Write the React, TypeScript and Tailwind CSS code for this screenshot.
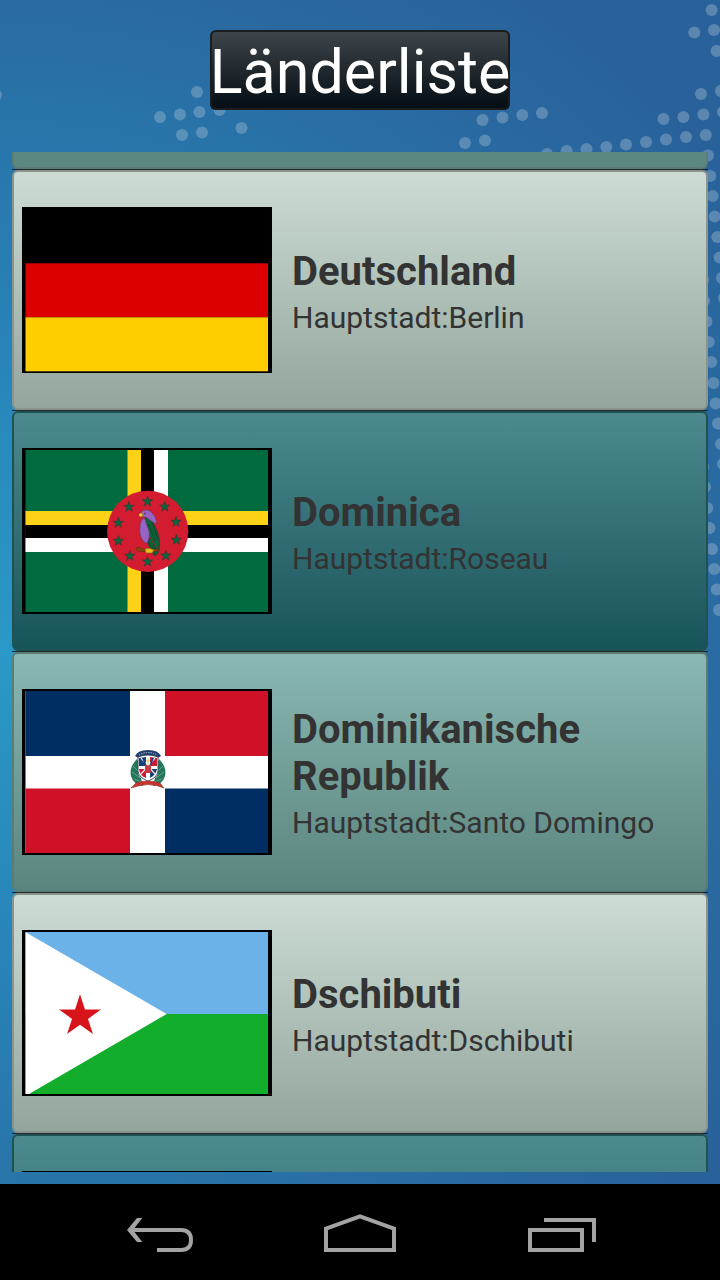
import React from "react";

const DOTS: [number, number][] = [
  [-4, 95], [197, 92], [160, 117], [180, 114.5], [199.5, 112], [219.5, 110], [182, 135], [202, 132.5], [241.5, 128],
  [711.7, 10], [694.3, 32.5], [714, 30], [716.5, 51], [701, 94], [721, 91],
  [482.5, 120], [502.5, 117.5], [522.3, 115], [542, 113], [465, 143], [485, 140.5],
  [663.5, 119], [683.5, 117], [703.5, 114.5], [723, 112],
  [547, 154], [566.7, 151], [586.5, 149], [606.3, 147], [626, 144.5], [646, 142], [666, 139.5], [686, 137], [705.8, 135],
  [708, 155.5], [710.3, 176], [712.7, 196], [714.7, 216.5], [717.3, 237], [719.7, 257.5], [722, 278], [724, 298],
  [703, 280], [704, 301], [706.5, 321.5], [708.8, 342], [711.2, 362], [713.5, 383], [715.7, 403.5], [718, 423.5], [721, 444], [723, 464],
  [703, 467], [705, 487], [707.3, 508], [709.5, 528], [712, 549], [714.3, 569], [716.7, 589.5], [719, 610],
];

function star(cx: number, cy: number, r: number) {
  return Array.from({ length: 10 }, (_, i) => {
    const a = (Math.PI / 5) * i - Math.PI / 2;
    const d = i % 2 ? r * 0.382 : r;
    return `${cx + d * Math.cos(a)},${cy + d * Math.sin(a)}`;
  }).join(" ");
}

function Flag({ name, children }: { name: string; children: React.ReactNode }) {
  return (
    <svg viewBox="0 0 250 166" role="img" aria-label={name} className="h-[166px] w-[250px] shrink-0">
      <rect width="250" height="166" fill="#000" />
      {children}
    </svg>
  );
}

const germany = (
  <>
    <rect x="3.5" y="56.3" width="242.5" height="54" fill="#d00" />
    <rect x="3.5" y="110.3" width="242.5" height="54" fill="#ffce00" />
  </>
);

const DOMINICA_STARS: [number, number][] = [
  [125.5, 53.5], [107, 59], [142.8, 58.8], [96.3, 75], [154, 74], [96.3, 93], [154.3, 92], [107.8, 108], [143.8, 107.8], [125.5, 113.7],
];

const dominica = (
  <>
    <rect x="3.5" y="2" width="242.5" height="162" fill="#006b3f" />
    <rect x="105.5" y="2" width="13.5" height="162" fill="#fcd116" />
    <rect x="132" y="2" width="14" height="162" fill="#fff" />
    <rect x="3.5" y="63" width="242.5" height="14" fill="#fcd116" />
    <rect x="3.5" y="90" width="242.5" height="14" fill="#fff" />
    <path d="M119 2H132V164H119ZM3.5 77H246V90H3.5Z" fill="#000" />
    <circle cx="125.7" cy="83.3" r="40.6" fill="#d41c30" />
    {DOMINICA_STARS.map(([x, y]) => (
      <polygon key={`${x}-${y}`} points={star(x, y, 5.4)} fill="#006b3f" stroke="#3a3a30" strokeWidth="0.8" />
    ))}
    <path d="M124 68C129 70 133 77 136 86C138 94 138 99 136 105L133 108L130 104C126 97 122 87 122 76Z" fill="#0b6238" stroke="#2d3b2d" strokeWidth="0.8" />
    <path d="M127 76L133 94M130 74L136 92M125 84L134 101M128 89L126 94L134 104" fill="none" stroke="#17402a" strokeWidth="0.8" />
    <path d="M127 88Q131 96 136 101" fill="none" stroke="#a02a2a" strokeWidth="0.9" />
    <path d="M120 71C118 76 117 83 119 89C120 92 123 95 125 95C128 90 128 84 125 78L123 71Z" fill="#9a62c7" stroke="#5c4a70" strokeWidth="0.7" />
    <path d="M119 65C121 61 127 61 130 65C133 68 135 72 134 76C130 74 127 71 124 69C122 69 120 69 119 68Z" fill="#9a62c7" stroke="#5c4a70" strokeWidth="0.7" />
    <path d="M120 65C117 65 116 67 118 69L121 68Z" fill="#fcd116" stroke="#806020" strokeWidth="0.5" />
    <circle cx="123" cy="65.4" r="1" fill="#5b3b6e" />
    <path d="M114 100Q117 98 121 101L136 101L137 103Q126 105 115 103Z" fill="#8c4310" stroke="#5f3010" strokeWidth="0.6" />
    <path d="M123 101Q127 99 132 102L130 105H124Z" fill="#e7bd18" stroke="#806020" strokeWidth="0.6" />
  </>
);

const dominicanRepublic = (
  <>
    <rect x="3.5" y="2" width="242.5" height="162" fill="#fff" />
    <path d="M3.5 2H108V67H3.5ZM143 99.5H246V164H143Z" fill="#002d62" />
    <path d="M143 2H246V67H143ZM3.5 99.5H108V164H3.5Z" fill="#ce1126" />
    <path d="M113 67Q116 61 126 61Q136 61 139 67L134 70Q126 65 118 70Z" fill="#1e3c6c" />
    <path d="M117 66Q126 61 135 66" fill="none" stroke="#c3cedd" strokeWidth="0.9" strokeDasharray="1.4 1" />
    <path d="M115 70Q107 78 109 87Q111 95 121 97L119 89Q114 84 117 75Z" fill="#24775a" />
    <path d="M137 70Q145 78 143 87Q141 95 131 97L133 89Q138 84 135 75Z" fill="#24775a" />
    <path d="M111 77L117 83M110 83L118 89M112 90L120 93M141 77L135 83M142 83L134 89M140 90L132 93" stroke="#7fb59d" strokeWidth="0.7" />
    <path d="M116 68Q126 64 136 68V82Q135 89 126 92Q117 89 116 82Z" fill="#fff" stroke="#39465c" strokeWidth="0.9" />
    <path d="M117 69L124 68V77H117ZM128 80H135Q134 86 128 89Z" fill="#163f79" />
    <path d="M128 68L135 69V77H128ZM117 80H124V89Q118 87 117 80Z" fill="#c91d35" />
    <path d="M119 69L133 85M133 69L119 85" stroke="#e7eaf0" strokeWidth="1.2" />
    <path d="M121 69L125 80M131 69L127 80" stroke="#163f79" strokeWidth="1.6" />
    <path d="M123 76H129V84H123Z" fill="#c23a45" />
    <path d="M126 69V77M124 72H128" stroke="#e4c75c" strokeWidth="1" />
    <path d="M109 99L114 94Q126 90 138 94L142 99L136 97Q126 94 116 97Z" fill="#c7332f" stroke="#8f3030" strokeWidth="0.6" />
  </>
);

const djibouti = (
  <>
    <rect x="3.5" y="2" width="242.5" height="82" fill="#6ab2e7" />
    <rect x="3.5" y="84" width="242.5" height="80" fill="#12ad2b" />
    <path d="M3.5 2L5 3L144.7 84L7 164H3.5Z" fill="#fff" />
    <polygon points={star(58, 86.3, 22)} fill="#d7141a" />
  </>
);

const COUNTRIES = [
  { name: "Deutschland", capital: "Berlin", flag: germany, tone: "border-[#8a938c] from-[#cdddd5] to-[#93a59c]" },
  { name: "Dominica", capital: "Roseau", flag: dominica, tone: "border-[#205350] from-[#4c8a90] to-[#175459]" },
  { name: "Dominikanische Republik", capital: "Santo Domingo", flag: dominicanRepublic, tone: "border-[#5c7d74] from-[#8ab8b2] to-[#5a857e]" },
  { name: "Dschibuti", capital: "Dschibuti", flag: djibouti, tone: "border-[#8a938c] from-[#cdddd5] to-[#93a59c]" },
];

export default function App() {
  return (
    <div className="flex min-h-screen flex-col bg-black font-['Roboto','Noto_Sans',sans-serif]">
      <main className="relative flex flex-1 flex-col overflow-hidden bg-[#29649b] bg-[radial-gradient(ellipse_125%_68%_at_0%_55%,#2a99c8_0%,#2883b8_38%,#2875aa_65%,#296ba2_80%,#29629a_100%)] px-3 pb-3">
        <svg aria-hidden="true" className="absolute top-0 right-0 h-[640px] w-[720px]" viewBox="0 0 720 640">
          {DOTS.map(([x, y]) => (
            <circle key={`${x}-${y}`} cx={x} cy={y} r="6" fill="#a5bfd2" fillOpacity="0.4" />
          ))}
        </svg>
        <header className="relative flex h-[152px] shrink-0 items-start justify-center pt-[30px]">
          <h1 className="h-20 rounded-md bg-linear-to-b from-[#40474c] to-[#050d13] text-[61px] leading-[84px] text-white inset-ring-2 inset-ring-[#191d20]">
            Länderliste
          </h1>
        </header>
        <div className="relative flex flex-1 flex-col">
          <div className="h-[17px] rounded-b-md border-2 border-t-0 border-[#5c7d74] bg-[#5b8880]" />
          <ul>
            {COUNTRIES.map((c) => (
              <li key={c.name} className="border-t border-[#20262a]">
                <a href="#" className={`flex h-60 items-center gap-5 rounded-md border-2 bg-linear-to-b px-2 text-[#333] ${c.tone}`}>
                  <Flag name={c.name}>{c.flag}</Flag>
                  <div className="min-w-0 flex-1 pt-0.5">
                    <h2 className="text-[40px] leading-[47px] font-bold">{c.name}</h2>
                    <p className="mt-[5px] text-[30px] leading-[35px]">Hauptstadt:{c.capital}</p>
                  </div>
                </a>
              </li>
            ))}
          </ul>
          <div className="flex flex-1 flex-col border-t border-[#20262a]">
            <div className="flex flex-1 items-end rounded-t-md border-2 border-b-0 border-[#205350] bg-linear-to-b from-[#4c8a90] to-[#468386] px-2">
              <div className="h-px w-[250px] bg-black" />
            </div>
          </div>
        </div>
      </main>
      <nav className="grid h-24 shrink-0 grid-cols-3 bg-black px-[60px]">
        <button type="button" aria-label="Zurück" className="flex items-center justify-center">
          <svg viewBox="0 0 80 48" className="h-12 w-20">
            <path d="M11 22H61C68 22 71 26 71 32S68 42 61 42H37" fill="none" stroke="#a3a3a3" strokeWidth="4" />
            <path d="M7 22L17 10H22.3L13 22L22.3 34H17Z" fill="#a3a3a3" />
          </svg>
        </button>
        <button type="button" aria-label="Startseite" className="flex items-center justify-center">
          <svg viewBox="0 0 80 48" className="h-12 w-20">
            <path d="M6 42V20.7L40 8.3L74 20.7V42Z" fill="none" stroke="#a3a3a3" strokeWidth="4" />
          </svg>
        </button>
        <button type="button" aria-label="Letzte Apps" className="flex items-center justify-center">
          <svg viewBox="0 0 80 48" className="h-12 w-20">
            <path d="M10 22H62V42H10ZM24 12H74V34" fill="none" stroke="#a3a3a3" strokeWidth="4" />
          </svg>
        </button>
      </nav>
    </div>
  );
}
